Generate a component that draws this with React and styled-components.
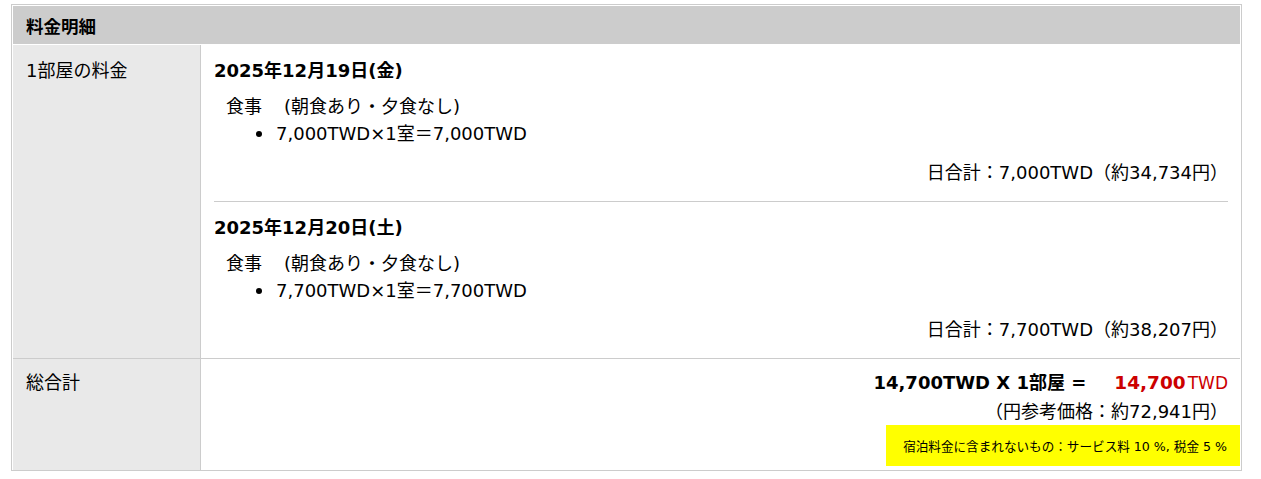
import React from "react";
import styled, { createGlobalStyle } from "styled-components";

const GlobalStyle = createGlobalStyle`
  html, body { margin: 0; padding: 0; background: #fff; }
  body {
    font-family: "DejaVu Sans", "Noto Sans CJK JP", sans-serif;
    color: #000;
    font-size: 18px;
  }
`;

const Page = styled.div`
  padding: 4px 0 0 11px;
`;

const Table = styled.div`
  width: 1231px;
  box-sizing: border-box;
  border: 1px solid #ccc;
  padding: 1px 1px 0 1px;
  background: #fff;
`;

const Header = styled.div`
  height: 38px;
  display: flex;
  align-items: center;
  padding-left: 13px;
  background: #ccc;
  font-weight: bold;
  font-size: 17.5px;
  margin-bottom: 1px;
`;

const Row = styled.div`
  display: grid;
  grid-template-columns: 188px 1fr;
  border-bottom: ${(p) => (p.$last ? "none" : "1px solid #ccc")};
`;

const LabelCell = styled.div`
  background: #e9e9e9;
  border-right: 1px solid #ccc;
  padding: ${(p) => (p.$compact ? "10px" : "12px")} 0 0 13px;
  line-height: 27px;
`;

const ValueCell = styled.div`
  padding: 0 12px 0 13px;
  display: flex;
  flex-direction: column;
`;

const DayBlock = styled.div`
  padding: 12px 0 15px;
  border-bottom: ${(p) => (p.$last ? "none" : "1px solid #ccc")};
  line-height: 27px;
`;

const DateLine = styled.div`
  font-weight: bold;
`;

const MealLine = styled.div`
  margin-top: 9px;
  padding-left: 12px;
  display: flex;
`;

const MealName = styled.span`
  margin-right: 22px;
`;

const PriceList = styled.ul`
  list-style: none;
  margin: 0;
  padding: 0 0 0 42px;
`;

const PriceItem = styled.li`
  display: flex;
  align-items: center;
  &::before {
    content: "";
    width: 6px;
    height: 6px;
    border-radius: 50%;
    background: #000;
    margin-right: 14px;
    flex: none;
  }
`;

const DayTotal = styled.div`
  margin-top: 12px;
  text-align: right;
`;

const TotalCell = styled(ValueCell)`
  padding-top: 10px;
  align-items: flex-end;
`;

const TotalLine = styled.div`
  display: flex;
  align-items: baseline;
  line-height: 27px;
  font-weight: bold;
`;

const Amount = styled.span`
  margin-left: 28px;
  color: #cc0000;
  font-weight: bold;
  font-size: 18.5px;
`;

const Unit = styled.span`
  margin-left: 2px;
  color: #cc0000;
  font-weight: normal;
  font-size: 17px;
`;

const YenLine = styled.div`
  margin-top: 2px;
  line-height: 26px;
`;

const Note = styled.div`
  width: 354px;
  height: 41px;
  box-sizing: border-box;
  margin-right: -12px;
  margin-bottom: 4px;
  padding-right: 13px;
  background: #ffff00;
  display: flex;
  align-items: center;
  justify-content: flex-end;
  font-size: 12.6px;
`;

const days = [
  {
    date: "2025年12月19日(金)",
    meal: "(朝食あり・夕食なし)",
    price: "7,000TWD×1室＝7,000TWD",
    total: "日合計：7,000TWD（約34,734円）",
  },
  {
    date: "2025年12月20日(土)",
    meal: "(朝食あり・夕食なし)",
    price: "7,700TWD×1室＝7,700TWD",
    total: "日合計：7,700TWD（約38,207円）",
  },
];

export default function App() {
  return (
    <Page>
      <GlobalStyle />
      <Table>
        <Header>料金明細</Header>
        <Row>
          <LabelCell>1部屋の料金</LabelCell>
          <ValueCell>
            {days.map((d, i) => (
              <DayBlock key={d.date} $last={i === days.length - 1}>
                <DateLine>{d.date}</DateLine>
                <MealLine>
                  <MealName>食事</MealName>
                  <span>{d.meal}</span>
                </MealLine>
                <PriceList>
                  <PriceItem>{d.price}</PriceItem>
                </PriceList>
                <DayTotal>{d.total}</DayTotal>
              </DayBlock>
            ))}
          </ValueCell>
        </Row>
        <Row $last>
          <LabelCell $compact>総合計</LabelCell>
          <TotalCell>
            <TotalLine>
              <span>14,700TWD X 1部屋 =</span>
              <Amount>
                14,700<Unit>TWD</Unit>
              </Amount>
            </TotalLine>
            <YenLine>（円参考価格：約72,941円）</YenLine>
            <Note>宿泊料金に含まれないもの：サービス料 10 %, 税金 5 %</Note>
          </TotalCell>
        </Row>
      </Table>
    </Page>
  );
}
